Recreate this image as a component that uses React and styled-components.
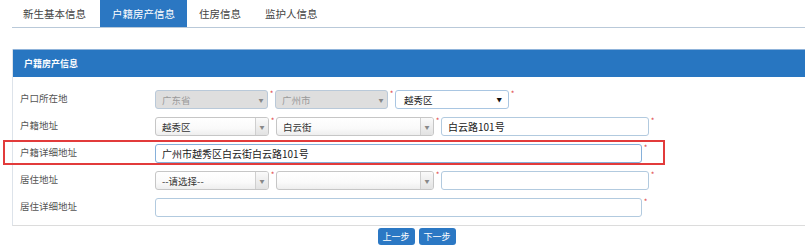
import styled, { createGlobalStyle } from "styled-components";

const Global = createGlobalStyle`
  html, body { margin: 0; padding: 0; background: #fff; }
  body {
    font-family: "Noto Sans CJK SC", "Liberation Sans", sans-serif;
    color: #444;
    width: 805px;
    height: 249px;
    overflow: hidden;
  }
`;

const TabBar = styled.div`
  display: flex;
  margin-left: 12px;
  height: 27px;
  border-bottom: 1px solid #b9c9d9;
`;

const Tab = styled.div`
  display: flex;
  align-items: center;
  padding: 0 12px;
  font-size: 10.5px;
  color: ${(p) => (p.$active ? "#fff" : "#444")};
  background: ${(p) => (p.$active ? "#2b77c2" : "transparent")};

  &:first-child {
    padding-left: 11px;
    padding-right: 14px;
  }
`;

const Panel = styled.div`
  margin: 21px 0 0 12px;
  border-left: 1px solid #dde3ea;
  border-bottom: 1px solid #dcdcdc;
`;

const PanelHead = styled.div`
  height: 27px;
  background: #2876c1;
  border-top: 1px solid #8fb3da;
  display: flex;
  align-items: center;
  padding-left: 11px;
  font-size: 9px;
  font-weight: bold;
  color: #fff;
`;

const PanelBody = styled.div`
  display: flex;
  flex-direction: column;
  gap: 8px;
  padding: 13px 0 8px;
`;

const Row = styled.div`
  position: relative;
  display: flex;
  align-items: flex-start;
  height: 19px;

  ${(p) =>
    p.$marked &&
    `
    &::after {
      content: "";
      position: absolute;
      left: -10px;
      top: -4px;
      width: 658px;
      height: 21px;
      border: 2px solid #e23b3b;
      pointer-events: none;
    }
  `}
`;

const Label = styled.div`
  width: 135px;
  padding-left: 7px;
  padding-top: 1px;
  font-size: 9.5px;
  line-height: 14px;
  color: #555;
  flex-shrink: 0;
`;

const Fields = styled.div`
  display: flex;
  align-items: flex-start;
`;

const Star = styled.span`
  width: 7px;
  font-size: 8px;
  line-height: 8px;
  color: #e04848;
  text-align: center;
  flex-shrink: 0;
`;

const SelectBox = styled.div`
  box-sizing: border-box;
  width: ${(p) => p.$w}px;
  height: 19px;
  display: flex;
  align-items: center;
  border: 1px solid ${(p) => (p.$disabled ? "#b9c9d9" : "#c6c6c6")};
  border-radius: 3px;
  background: ${(p) =>
    p.$disabled ? "#dedede" : "linear-gradient(#fff 0%, #fafafa 60%, #eee 100%)"};
  font-size: 9.5px;
  color: ${(p) => (p.$disabled ? "#9a9a9a" : "#333")};
  overflow: hidden;
`;

const SelectText = styled.span`
  flex: 1;
  padding-left: 6px;
`;

const ArrowBox = styled.span`
  width: 12px;
  height: 100%;
  display: flex;
  align-items: center;
  justify-content: center;
  font-size: 5px;
  color: #888;
  border-left: ${(p) => (p.$split ? "1px solid #cfcfcf" : "none")};
  background: ${(p) => (p.$split ? "linear-gradient(#fafafa, #e2e2e2)" : "transparent")};
`;

const NativeSelect = styled.div`
  box-sizing: border-box;
  width: ${(p) => p.$w}px;
  height: 19px;
  display: flex;
  align-items: center;
  justify-content: space-between;
  padding: 0 6px 0 8px;
  border: 1px solid #a9c6e2;
  border-radius: 3px;
  background: #fff;
  font-size: 9.5px;
  color: #222;
`;

const Caret = styled.span`
  font-size: 5.5px;
  color: #111;
`;

const Input = styled.div`
  box-sizing: border-box;
  width: ${(p) => p.$w}px;
  height: 19px;
  display: flex;
  align-items: center;
  padding-left: 6px;
  border: 1px solid ${(p) => (p.$focus ? "#86b0da" : "#b2cadf")};
  border-radius: 3px;
  background: #fff;
  font-size: 10px;
  color: #222;
`;

const Actions = styled.div`
  display: flex;
  justify-content: center;
  gap: 4px;
  padding-left: 28px;
  margin-top: 2px;
`;

const Button = styled.button`
  width: 37px;
  height: 17px;
  border: none;
  border-radius: 3px;
  background: #2b78c4;
  color: #fff;
  font-family: inherit;
  font-size: 9px;
  padding: 0;
`;

const Select = ({ w, text, disabled, split }) => (
  <SelectBox $w={w} $disabled={disabled}>
    <SelectText>{text}</SelectText>
    <ArrowBox $split={split}>▼</ArrowBox>
  </SelectBox>
);

const tabs = ["新生基本信息", "户籍房产信息", "住房信息", "监护人信息"];

const App = () => {
  return (
    <>
      <Global />
      <TabBar>
        {tabs.map((t, i) => (
          <Tab key={t} $active={i === 1}>
            {t}
          </Tab>
        ))}
      </TabBar>
      <Panel>
        <PanelHead>户籍房产信息</PanelHead>
        <PanelBody>
          <Row>
            <Label>户口所在地</Label>
            <Fields>
              <Select w={113} text="广东省" disabled />
              <Star>*</Star>
              <Select w={113} text="广州市" disabled />
              <Star>*</Star>
              <NativeSelect $w={114}>
                越秀区<Caret>▼</Caret>
              </NativeSelect>
              <Star>*</Star>
            </Fields>
          </Row>
          <Row>
            <Label>户籍地址</Label>
            <Fields>
              <Select w={114} text="越秀区" split />
              <Star>*</Star>
              <Select w={158} text="白云街" split />
              <Star>*</Star>
              <Input $w={208}>白云路101号</Input>
              <Star>*</Star>
            </Fields>
          </Row>
          <Row $marked>
            <Label>户籍详细地址</Label>
            <Fields>
              <Input $w={487} $focus>
                广州市越秀区白云街白云路101号
              </Input>
              <Star>*</Star>
            </Fields>
          </Row>
          <Row>
            <Label>居住地址</Label>
            <Fields>
              <Select w={114} text="--请选择--" split />
              <Star>*</Star>
              <Select w={158} text="" split />
              <Star>*</Star>
              <Input $w={208} />
              <Star>*</Star>
            </Fields>
          </Row>
          <Row>
            <Label>居住详细地址</Label>
            <Fields>
              <Input $w={487} />
              <Star>*</Star>
            </Fields>
          </Row>
        </PanelBody>
      </Panel>
      <Actions>
        <Button>上一步</Button>
        <Button>下一步</Button>
      </Actions>
    </>
  );
};

export default App;
